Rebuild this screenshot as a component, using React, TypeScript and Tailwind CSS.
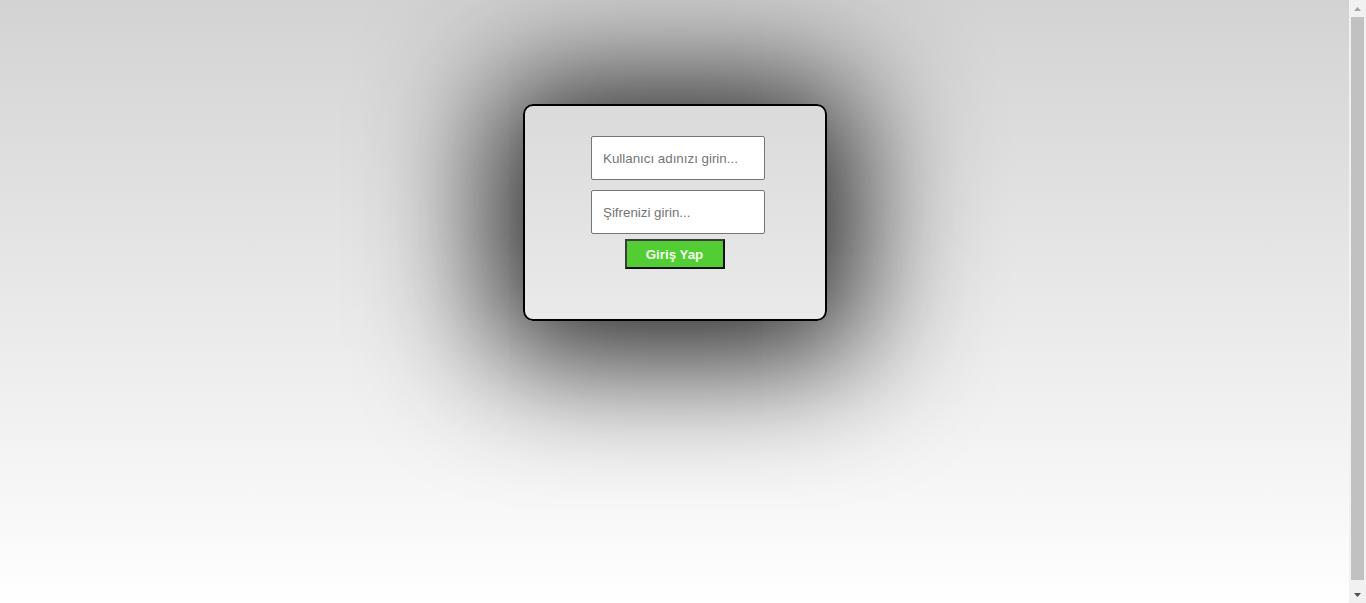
import React from "react";

function Scrollbar() {
  return (
    <div className="fixed right-0 top-0 h-[603px] w-[17px] bg-[#f1f1f1] flex flex-col items-center">
      <div className="h-[17px] w-full flex items-center justify-center">
        <svg width="7" height="4" viewBox="0 0 7 4">
          <path d="M0 4 L3.5 0 L7 4 Z" fill="#a3a3a3" />
        </svg>
      </div>
      <div className="flex-1 w-full px-[2px]">
        <div className="h-[563px] w-full bg-[#c1c1c1]" />
      </div>
      <div className="h-[17px] w-full flex items-center justify-center">
        <svg width="7" height="4" viewBox="0 0 7 4">
          <path d="M0 0 L7 0 L3.5 4 Z" fill="#505050" />
        </svg>
      </div>
    </div>
  );
}

export default function App() {
  return (
    <div className="h-[608px] w-full bg-gradient-to-b from-[#d3d3d3] to-[#ffffff] overflow-hidden font-['Liberation_Sans',Arial,sans-serif]">
      <div className="w-[calc(100%-17px)] flex flex-col items-center">
        <div className="mt-[104px] w-[304px] h-[217px] border-2 border-black rounded-[10px] shadow-[0_8px_128px_30px_rgba(0,0,0,0.85)] flex flex-col items-center pt-[30px]">
          <input
            type="text"
            placeholder="Kullanıcı adınızı girin..."
            className="ml-[7px] w-[174px] h-[44px] bg-white border border-[#767676] rounded-[2px] px-[11px] text-[13.333px] text-black placeholder:text-[#757575] outline-none"
          />
          <input
            type="password"
            placeholder="Şifrenizi girin..."
            className="ml-[7px] mt-[10px] w-[174px] h-[44px] bg-white border border-[#767676] rounded-[2px] px-[11px] text-[13.333px] text-black placeholder:text-[#757575] outline-none"
          />
          <button
            type="button"
            className="mt-[5px] w-[100px] h-[30px] bg-[#52cd34] border-2 border-t-[#3c3c3c] border-l-[#3c3c3c] border-r-[#101010] border-b-[#101010] text-[#f4fff0] font-bold text-[13.333px] leading-none pt-[1px]"
          >
            Giriş Yap
          </button>
        </div>
      </div>
      <Scrollbar />
    </div>
  );
}
